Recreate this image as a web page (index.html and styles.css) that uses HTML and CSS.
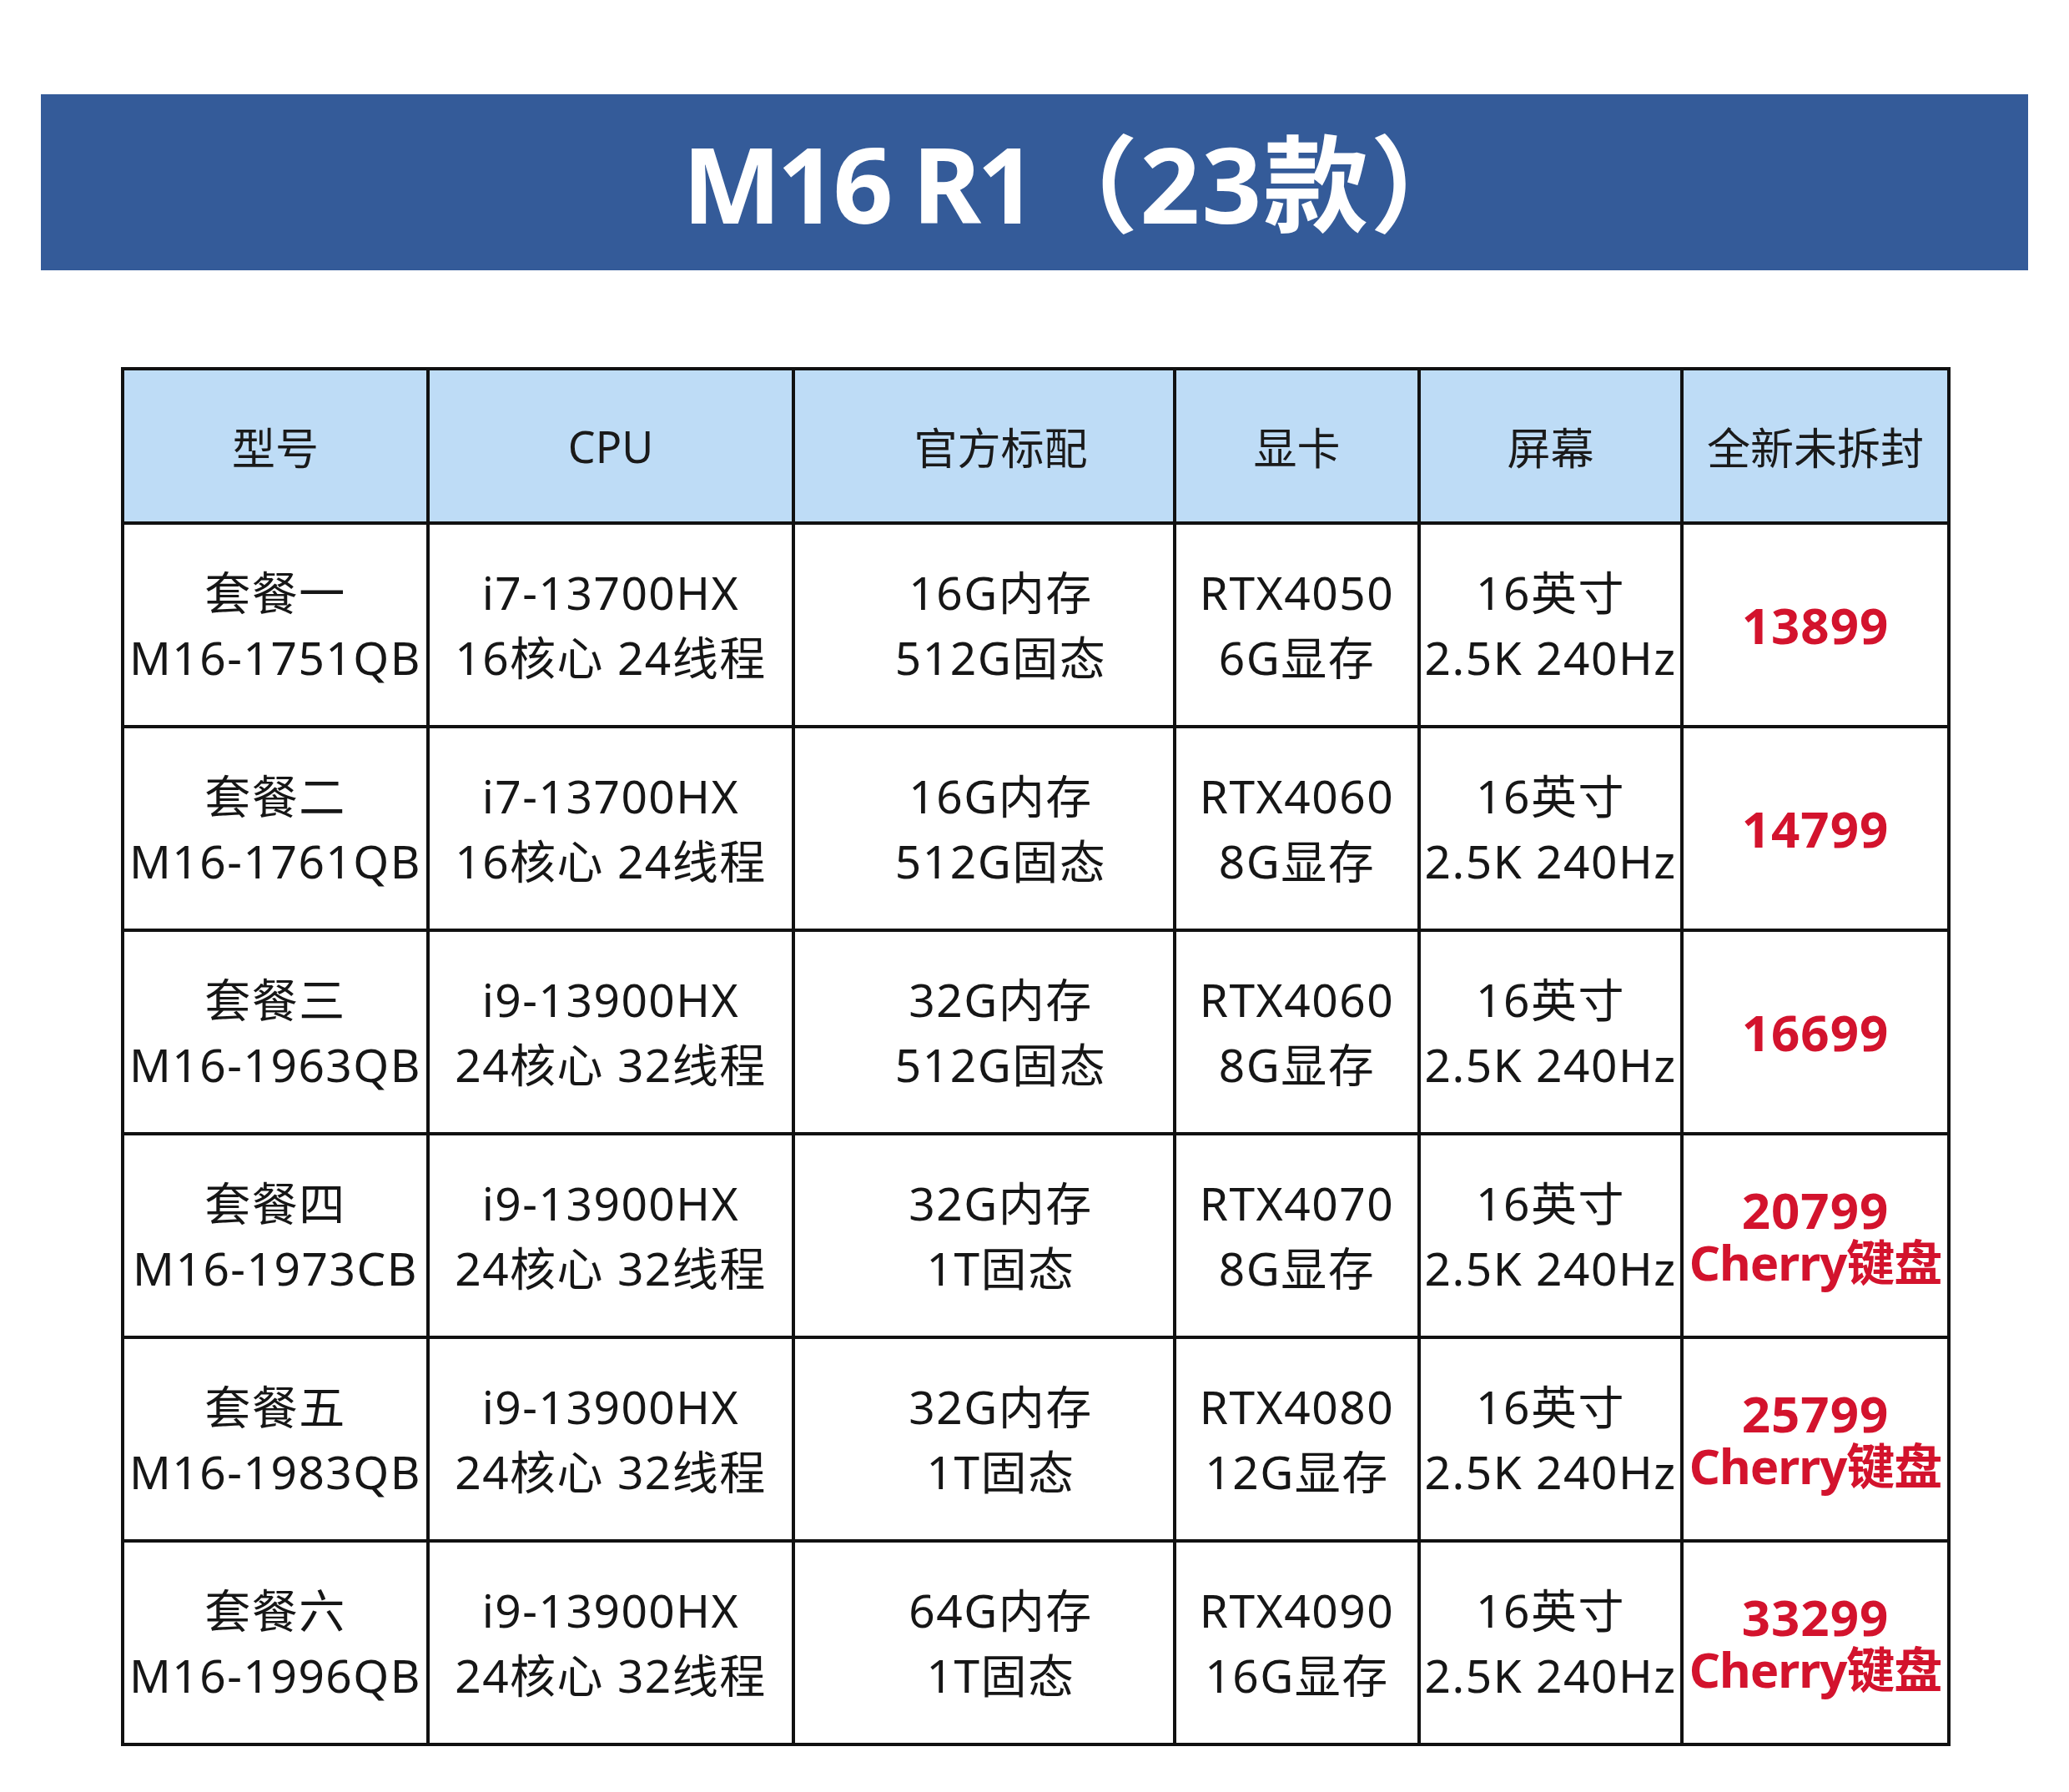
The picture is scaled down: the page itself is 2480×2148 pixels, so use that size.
FILE: index.html
```html
<!DOCTYPE html>
<html lang="zh-CN">
<head>
<meta charset="utf-8">
<title>M16 R1（23款）</title>
<link rel="stylesheet" href="styles.css">
</head>
<body>
<div class="page">
  <header class="banner">
    <h1 class="title"><span class="title-latin">M16 R1</span><span class="title-cjk">（23款）</span></h1>
  </header>
  <table class="spec">
    <colgroup>
      <col class="c1"><col class="c2"><col class="c3"><col class="c4"><col class="c5"><col class="c6">
    </colgroup>
    <thead>
      <tr>
        <th>型号</th>
        <th>CPU</th>
        <th class="shift">官方标配</th>
        <th>显卡</th>
        <th>屏幕</th>
        <th>全新未拆封</th>
      </tr>
    </thead>
    <tbody>
      <tr>
        <td>套餐一<br>M16-1751QB</td>
        <td>i7-13700HX<br>16核心 24线程</td>
        <td class="shift">16G内存<br>512G固态</td>
        <td>RTX4050<br>6G显存</td>
        <td>16英寸<br>2.5K 240Hz</td>
        <td class="price"><span class="num">13899</span></td>
      </tr>
      <tr>
        <td>套餐二<br>M16-1761QB</td>
        <td>i7-13700HX<br>16核心 24线程</td>
        <td class="shift">16G内存<br>512G固态</td>
        <td>RTX4060<br>8G显存</td>
        <td>16英寸<br>2.5K 240Hz</td>
        <td class="price"><span class="num">14799</span></td>
      </tr>
      <tr>
        <td>套餐三<br>M16-1963QB</td>
        <td>i9-13900HX<br>24核心 32线程</td>
        <td class="shift">32G内存<br>512G固态</td>
        <td>RTX4060<br>8G显存</td>
        <td>16英寸<br>2.5K 240Hz</td>
        <td class="price"><span class="num">16699</span></td>
      </tr>
      <tr>
        <td>套餐四<br>M16-1973CB</td>
        <td>i9-13900HX<br>24核心 32线程</td>
        <td class="shift">32G内存<br>1T固态</td>
        <td>RTX4070<br>8G显存</td>
        <td>16英寸<br>2.5K 240Hz</td>
        <td class="price"><span class="num">20799</span><br>Cherry键盘</td>
      </tr>
      <tr>
        <td>套餐五<br>M16-1983QB</td>
        <td>i9-13900HX<br>24核心 32线程</td>
        <td class="shift">32G内存<br>1T固态</td>
        <td>RTX4080<br>12G显存</td>
        <td>16英寸<br>2.5K 240Hz</td>
        <td class="price"><span class="num">25799</span><br>Cherry键盘</td>
      </tr>
      <tr>
        <td>套餐六<br>M16-1996QB</td>
        <td>i9-13900HX<br>24核心 32线程</td>
        <td class="shift">64G内存<br>1T固态</td>
        <td>RTX4090<br>16G显存</td>
        <td>16英寸<br>2.5K 240Hz</td>
        <td class="price"><span class="num">33299</span><br>Cherry键盘</td>
      </tr>
    </tbody>
  </table>
</div>
</body>
</html>
```

FILE: styles.css
```css
html, body {
  margin: 0;
  padding: 0;
  background: #ffffff;
}

body {
  font-family: "Noto Sans", "Noto Sans CJK SC", sans-serif;
  color: #161616;
}

.page {
  padding-top: 113px;
}

.banner {
  margin: 0 49px;
  height: 211px;
  background: #345b99;
  display: flex;
  align-items: center;
  justify-content: center;
}

.title {
  margin: 0;
  padding-left: 108px;
  color: #ffffff;
  font-family: "Noto Sans", "Noto Sans CJK SC", sans-serif;
  font-weight: 700;
  font-size: 126px;
  line-height: 1;
  white-space: nowrap;
}

.title-latin {
  letter-spacing: -5px;
}

.title-cjk {
  letter-spacing: 2px;
}

.spec {
  margin: 116px 0 0 145px;
  border-collapse: collapse;
  table-layout: fixed;
  width: 2189px;
  border: 4px solid #111111;
}

.c1 { width: 366px; }
.c2 { width: 438px; }
.c3 { width: 457px; }
.c4 { width: 293px; }
.c5 { width: 315px; }
.c6 { width: 320px; }

.spec th,
.spec td {
  border: 4px solid #111111;
  text-align: center;
  vertical-align: middle;
  padding: 0;
  white-space: nowrap;
}

.spec th {
  background: #bedcf6;
  font-weight: 400;
  font-size: 52px;
  height: 181px;
  color: #1a1a1a;
}

.spec td {
  font-size: 55px;
  line-height: 78px;
  letter-spacing: 1.5px;
  height: 240px;
}

.spec .shift {
  padding-left: 40px;
}

.spec td.price {
  color: #d3132d;
  font-weight: 700;
  font-size: 58px;
  line-height: 62px;
  letter-spacing: -1px;
}

.spec td.price .num {
  font-size: 60px;
  letter-spacing: 1px;
}
```
